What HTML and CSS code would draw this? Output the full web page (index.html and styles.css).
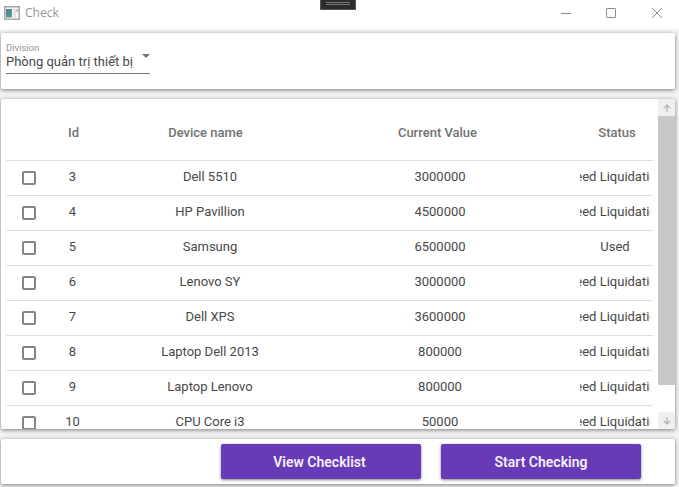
FILE: index.html
```
<!DOCTYPE html>
<html lang="vi">
<head>
<meta charset="utf-8">
<title>Check</title>
<link rel="stylesheet" href="styles.css">
</head>
<body>
<div class="window">
  <header class="titlebar">
    <svg class="app-icon" width="16" height="14" viewBox="0 0 16 14"><defs><linearGradient id="g" x2="1" y2="1"><stop stop-color="#4b7fa8"/><stop offset="1" stop-color="#62a184"/></linearGradient></defs><rect x=".75" y=".75" width="14.5" height="12.5" fill="#f8f8f8" stroke="#a5a9aa" stroke-width="1.5"/><rect x="2" y="3" width="6" height="8.500" fill="url(#g)"/><path d="M9 3h3v8.500H9z" fill="#e0e3e5"/><path d="M12.500 3h1.500v3h-1.500z" fill="#a5adb0"/></svg>
    <span class="title">Check</span>
    <svg class="controls" width="103" height="12" viewBox="0 0 103 12" fill="none" stroke="#8c8c8c"><path d="M0 6.500h10"/><rect x="45.500" y="1.500" width="9" height="9" rx=".5"/><path d="M91 1l10 10M101 1L91 11"/></svg>
    <div class="grip"><i></i><i></i></div>
  </header>
  <section class="card filter">
    <div class="select">
      <label>Division</label>
      <div class="value"><span>Phòng quản trị thiết bị</span><svg width="8" height="4" viewBox="0 0 8 4"><path d="M0 0h8L4 4z" fill="#757575"/></svg></div>
    </div>
  </section>
  <section class="card list">
    <div class="table">
      <div class="row head"><span></span><span class="id">Id</span><span class="name">Device name</span><span class="current">Current Value</span><span class="status">Status</span></div>
      <div class="row"><i class="box"></i><span>3</span><span>Dell 5510</span><span>3000000</span><span class="clip">Need Liquidation</span></div>
      <div class="row"><i class="box"></i><span>4</span><span>HP Pavillion</span><span>4500000</span><span class="clip">Need Liquidation</span></div>
      <div class="row"><i class="box"></i><span>5</span><span>Samsung</span><span>6500000</span><span class="clip">Used</span></div>
      <div class="row"><i class="box"></i><span>6</span><span>Lenovo SY</span><span>3000000</span><span class="clip">Need Liquidation</span></div>
      <div class="row"><i class="box"></i><span>7</span><span>Dell XPS</span><span>3600000</span><span class="clip">Need Liquidation</span></div>
      <div class="row"><i class="box"></i><span>8</span><span>Laptop Dell 2013</span><span>800000</span><span class="clip">Need Liquidation</span></div>
      <div class="row"><i class="box"></i><span>9</span><span>Laptop Lenovo</span><span>800000</span><span class="clip">Need Liquidation</span></div>
      <div class="row"><i class="box"></i><span>10</span><span>CPU Core i3</span><span>50000</span><span class="clip">Need Liquidation</span></div>
    </div>
    <div class="scrollbar">
      <div class="arrow"><svg width="8" height="8" viewBox="0 0 8 8"><path d="M4 8V1M.6 4.400L4 1l3.400 3.400"/></svg></div>
      <div class="thumb"></div>
      <div class="arrow"><svg width="8" height="8" viewBox="0 0 8 8"><path d="M4 0v7M.6 3.600L4 7l3.400-3.400"/></svg></div>
    </div>
  </section>
  <section class="card actions">
    <button class="view">View Checklist</button>
    <button>Start Checking</button>
  </section>
</div>
</body>
</html>
```
FILE: styles.css
```
* { box-sizing: border-box; }
body { margin: 0; background: #f3f3f3; font: 13px/16px Roboto, "Liberation Sans", sans-serif; color: #484848; }
.window { width: 679px; height: 487px; overflow: hidden; padding-right: 4px; padding-left: 1px; display: flex; flex-direction: column; }
.titlebar { height: 27px; margin: 0 -4px 6px -1px; flex: none; display: flex; align-items: center; padding: 0 17px 0 4px; background: #fff; position: relative; box-shadow: 0 1px 3px 1px #fff; }
.title { font: 12px/16px "Open Sans", "Noto Sans", sans-serif; color: #969696; margin-left: 5px; margin-top: -1px; }
.app-icon { margin-top: -2px; }
.controls { margin-left: auto; margin-top: -2px; margin-right: -2px; }
.grip { position: absolute; left: 320px; top: 0; width: 36px; height: 10px; background: #2d2d30; border: 1px solid #555; border-top: 0; padding: 2px 5px; }
.grip i { display: block; height: 1px; background: #777; margin-bottom: 1px; }
.card { flex: none; background: #fff; border-radius: 2px; box-shadow: 0 1px 4px rgba(0,0,0,.5); margin-bottom: 10px; }
.filter { height: 56px; padding: 10px 5px; }
.select { width: 144px; height: 31px; border-bottom: 1px solid #777; }
.select label { display: block; font-size: 9.5px; line-height: 10px; color: #929292; }
.value { display: flex; justify-content: space-between; line-height: 17px; }
.value svg { margin-top: 1px; }
.list { height: 330px; display: flex; justify-content: space-between; overflow: hidden; }
.table { width: 647px; margin-left: 5px; }
.row { display: grid; grid-template-columns: 46px 41px 234px 226px 100px; height: 35px; border-bottom: 1px solid #dedede; text-align: center; padding-top: 8px; }
.head { height: 62px; padding-top: 26px; font-weight: 500; color: #727272; }
.head .id { padding-left: 2px; }
.head .name { padding-right: 9px; }
.head .current { padding-right: 5px; }
.head .status { padding-left: 28px; }
.box { width: 14px; height: 14px; border: 2px solid #858585; border-radius: 2px; margin: 2px 0 0 16px; }
.clip { width: 70px; margin-left: 27px; display: flex; justify-content: center; overflow: hidden; white-space: nowrap; }
.scrollbar { width: 17px; display: flex; flex-direction: column; }
.arrow { height: 17px; background: #f0f0f0; display: flex; align-items: center; justify-content: center; }
.arrow svg { fill: none; stroke: #b5b5b5; stroke-width: 1.300; }
.thumb { height: 269px; background: #c8c8c8; margin-bottom: 27px; }
.actions { height: 45px; padding: 5px 34px 5px 0; display: flex; justify-content: flex-end; gap: 20px; }
button { width: 200px; height: 35px; border: 0; border-radius: 2px; background: #673ab7; color: #f5f0fb; font: 600 14px/16px Roboto, sans-serif; box-shadow: 0 1px 3px rgba(0,0,0,.5); padding: 0; }
.view { padding-right: 3px; }
```
